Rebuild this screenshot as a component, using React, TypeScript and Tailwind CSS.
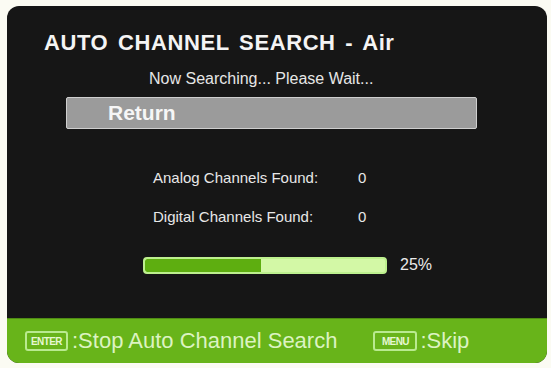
export default function App() {
  const progress = 25;

  return (
    <div className="w-[551px] h-[368px] bg-[#fbfbf3] pt-[6px] pl-[7px] font-['Liberation_Sans',Arial,sans-serif]">
      <div className="w-[540px] h-[357px] rounded-[12px] bg-[#161616] overflow-hidden flex flex-col">
        <div className="flex-1 flex flex-col">
          <h1 className="mt-[25px] pl-[37px] text-[22px] leading-[24px] font-bold tracking-[0.6px] [word-spacing:3px] text-[#f4f4f4]">
            AUTO CHANNEL SEARCH - Air
          </h1>
          <p className="mt-[14px] pl-[142px] text-[16px] leading-[20px] text-[#e6e6e6]">
            Now Searching... Please Wait...
          </p>

          <div className="mt-[8px] ml-[59px] w-[411px] h-[32px] rounded-[2px] border border-[#cfcfcf] bg-[#9b9b9b] flex items-center pl-[41px]">
            <span className="text-[21px] font-bold text-[#f6f6f6]">Return</span>
          </div>

          <div className="mt-[39px] ml-[146px] flex text-[15px] leading-[20px] text-[#e8e8e8]">
            <span className="w-[205px]">Analog Channels Found:</span>
            <span>0</span>
          </div>
          <div className="mt-[19px] ml-[146px] flex text-[15px] leading-[20px] text-[#e8e8e8]">
            <span className="w-[205px]">Digital Channels Found:</span>
            <span>0</span>
          </div>

          <div className="mt-[28px] ml-[136px] flex items-center gap-[13px]">
            <div className="w-[244px] h-[17px] rounded-[4px] border-2 border-[#bdf08e] bg-[#d3f8a6] overflow-hidden">
              <div className="h-full bg-[#5eae10] rounded-l-[2px]" style={{ width: `${progress * 1.93}%` }} />
            </div>
            <span className="text-[16px] leading-[20px] text-[#eaeaea]">{progress}%</span>
          </div>
        </div>

        <div className="h-[45px] bg-[#68b41a] border-t border-[#4f8c14] flex items-center pl-[18px] text-[#dcf3c2]">
          <span className="w-[43px] h-[20px] rounded-[3px] border-2 border-[#b9ea8f] flex items-center justify-center text-[10px] font-bold tracking-[-0.6px] text-[#e6f8d2]">
            ENTER
          </span>
          <span className="ml-[4px] text-[22px] leading-[24px]">:Stop Auto Channel Search</span>
          <span className="ml-[36px] w-[44px] h-[20px] rounded-[3px] border-2 border-[#b9ea8f] flex items-center justify-center text-[10px] font-bold tracking-[-0.6px] text-[#e6f8d2]">
            MENU
          </span>
          <span className="ml-[3px] text-[22px] leading-[24px]">:Skip</span>
        </div>
      </div>
    </div>
  );
}
